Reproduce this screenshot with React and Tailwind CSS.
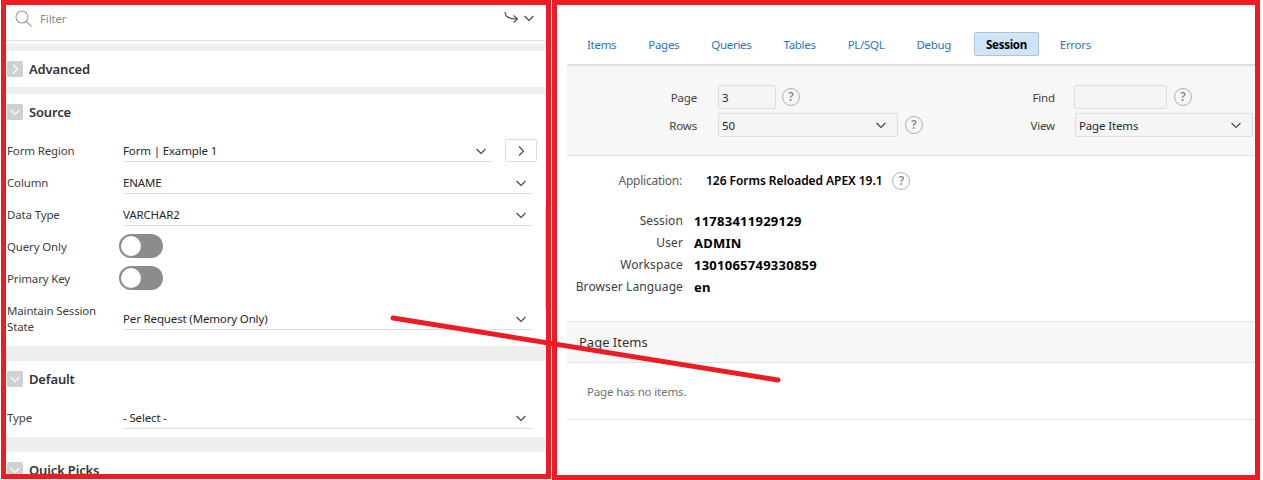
import React from 'react';

const Chevron = ({ dir = 'down', className = '', color = '#444' }) => (
    <svg width="12" height="12" viewBox="0 0 12 12" fill="none" stroke={color} strokeWidth="1.1" className={className}>
        {dir === 'down' ? <path d="M1.5 4l4.5 4.5L10.5 4" /> : <path d="M4 1.5L8.5 6 4 10.5" />}
    </svg>
);

const Help = () => (
    <span className="w-[18px] h-[18px] rounded-full border-[1.5px] border-[#b0b0b0] text-[#8a8a8a] text-[12px] font-semibold flex items-center justify-center shrink-0 leading-none">?</span>
);

const GrayBar = ({ h }) => <div className={`bg-[#eeeeee] ${h}`}></div>;

const SectionHeader = ({ title, open = true }) => (
    <div className="h-9 flex items-center gap-[6px] pl-[1px]">
        <span className="w-4 h-4 rounded-[2px] bg-[#d0d0d0] flex items-center justify-center">
            <Chevron dir={open ? 'down' : 'right'} color="#ffffff" />
        </span>
        <span className="text-[13px] font-semibold text-[#333] -mt-[1px]">{title}</span>
    </div>
);

const Value = ({ children }) => (
    <div className="flex-1 flex items-end border-b border-[#dfdfdf] pb-[1px]">
        <div className="flex-1 h-[18px] flex items-center justify-between pr-[6px]">
            <span className="text-[#262626]">{children}</span>
            <Chevron />
        </div>
    </div>
);

const SelectRow = ({ label, value, tall }) => (
    <div className={`flex pl-[1px] pr-[12px] ${tall ? 'h-10' : 'h-8'}`}>
        <label className={`w-[116px] shrink-0 text-[#404040] self-end ${tall ? 'leading-[16px] -mb-[5px]' : 'pb-[2px]'}`}>{label}</label>
        <Value>{value}</Value>
    </div>
);

const ToggleRow = ({ label }) => (
    <div className="flex items-end h-8 pl-[1px]">
        <label className="w-[112px] shrink-0 text-[#404040] pb-[2px]">{label}</label>
        <span className="w-11 h-6 rounded-full bg-[#8c8c8c] flex items-center pl-[2px]">
            <span className="w-5 h-5 rounded-full bg-white"></span>
        </span>
    </div>
);

const ToolLeft = () => (
    <div className="w-[548px] shrink-0 pl-[6px] pr-[3px] text-[11.5px] tracking-[-0.15px]">
        <div className="h-[41px] flex items-center justify-between border-b border-[#dfdfdf] pl-[9px] pr-[10px]">
            <div className="flex items-center gap-2 text-[#8a8a8a] -mt-[3px]">
                <svg width="17" height="17" viewBox="0 0 17 17" fill="none" stroke="#a0a0a0" strokeWidth="1.1">
                    <circle cx="7" cy="7" r="6" />
                    <path d="M11.5 11.5l5 5" />
                </svg>
                <span>Filter</span>
            </div>
            <div className="flex items-center gap-1 -mt-[4px]">
                <svg width="15" height="14" viewBox="0 0 15 14" fill="none" stroke="#444" strokeWidth="1.1">
                    <path d="M1 1c0 5 4 7 12 7" />
                    <path d="M9.5 4.5L13.5 8l-4 3.5" />
                </svg>
                <Chevron />
            </div>
        </div>
        <div className="h-[3px]"></div>
        <GrayBar h="h-[7px]" />
        <SectionHeader title="Advanced" open={false} />
        <GrayBar h="h-[7px]" />
        <SectionHeader title="Source" />
        <div className="flex h-8 pl-[1px] pr-[8px]">
            <label className="w-[116px] shrink-0 self-end pb-[2px] text-[#404040]">Form Region</label>
            <Value>Form | Example 1</Value>
            <button className="w-8 h-[23px] ml-3 self-end border border-[#dcdcdc] rounded-[2px] flex items-center justify-center">
                <Chevron dir="right" />
            </button>
        </div>
        <SelectRow label="Column" value="ENAME" />
        <SelectRow label="Data Type" value="VARCHAR2" />
        <ToggleRow label="Query Only" />
        <ToggleRow label="Primary Key" />
        <SelectRow label="Maintain Session State" value="Per Request (Memory Only)" tall />
        <div className="h-4"></div>
        <GrayBar h="h-[15px]" />
        <SectionHeader title="Default" />
        <SelectRow label="Type" value="- Select -" />
        <div className="h-2"></div>
        <GrayBar h="h-[15px]" />
        <SectionHeader title="Quick Picks" />
    </div>
);

const tabs = ['Items', 'Pages', 'Queries', 'Tables', 'PL/SQL', 'Debug', 'Session', 'Errors'];

const Field = ({ label, labelWidth, children }) => (
    <div className="flex items-center h-6">
        <span className={`${labelWidth} text-right text-[#404040] shrink-0 text-[11.5px] tracking-[-0.15px] pt-[2px]`}>{label}</span>
        {children}
    </div>
);

const InfoRow = ({ label, value }) => (
    <div className="flex h-[22px] items-center">
        <span className="w-[116px] text-right text-[#404040] shrink-0 tracking-[0.1px]">{label}</span>
        <span className="ml-[11px] font-bold text-[13px] tracking-[0.25px] text-black">{value}</span>
    </div>
);

const Input = ({ w, value, select, ml = 'ml-[21px]' }) => (
    <div className={`${w} ${ml} h-6 border border-[#dcdcdc] rounded-[2px] bg-[#f5f5f5] flex items-center justify-between pl-[3px] pr-[10px] text-[#262626] text-[11.5px] tracking-[-0.15px] shrink-0`}>
        <span className="pt-[1px]">{value}</span>
        {select && <Chevron />}
    </div>
);

const ToolRight = () => (
    <div className="flex-1 pl-[19px] pr-[5px]">
        <div className="h-[64px] pt-[32px] pl-[5px]">
            <div className="flex gap-[2px] text-[11.5px] tracking-[-0.3px]">
                {tabs.map((t) => (
                    <span
                        key={t}
                        className={
                            t === 'Session'
                                ? 'h-6 px-[11px] ml-[6px] mr-[4px] pt-[1px] flex items-center font-bold text-black bg-[#cfe4f7] border border-[#a9c5dc] rounded-[2px]'
                                : 'h-6 px-[15px] pt-[2px] flex items-center text-[#2b74c5]'
                        }
                    >
                        {t}
                    </span>
                ))}
            </div>
        </div>
        <div className="h-[92px] bg-[#f7f7f7] border-t-2 border-b border-t-[#dfdfdf] border-b-[#e2e2e2] flex pt-[19px] overflow-hidden">
            <div className="w-[430px] shrink-0 flex flex-col gap-1">
                <Field label="Page" labelWidth="w-[130px]">
                    <Input w="w-[58px]" value="3" />
                    <span className="ml-[6px]"><Help /></span>
                </Field>
                <Field label="Rows" labelWidth="w-[130px]">
                    <Input w="w-[180px]" value="50" select />
                    <span className="ml-[7px]"><Help /></span>
                </Field>
            </div>
            <div className="flex flex-col gap-1">
                <Field label="Find" labelWidth="w-[58px]">
                    <Input w="w-[93px]" value="" ml="ml-[19px]" />
                    <span className="ml-[7px]"><Help /></span>
                </Field>
                <Field label="View" labelWidth="w-[58px]">
                    <Input w="w-[178px]" value="Page Items" select ml="ml-[20px]" />
                </Field>
            </div>
        </div>
        <div className="h-[165px] pt-[16px]">
            <div className="flex items-center h-[18px]">
                <span className="w-[115px] text-right text-[#5a5a5a] shrink-0 tracking-[-0.25px]">Application:</span>
                <span className="ml-[24px] font-semibold text-black tracking-[-0.05px]">126 Forms Reloaded APEX 19.1</span>
                <span className="ml-[10px]"><Help /></span>
            </div>
            <div className="mt-[20px]">
                <InfoRow label="Session" value="11783411929129" />
                <InfoRow label="User" value="ADMIN" />
                <InfoRow label="Workspace" value="1301065749330859" />
                <InfoRow label="Browser Language" value="en" />
            </div>
        </div>
        <div className="h-[42px] bg-[#f8f8f8] border-y border-[#e0e0e0] flex items-center pl-3 text-[13px] text-[#333]">Page Items</div>
        <div className="h-[57px] border-b border-[#e0e0e0] flex items-center pl-5 pt-[2px] text-[11.5px] tracking-[-0.15px] text-[#707070]">Page has no items.</div>
    </div>
);

export default function App() {
    return (
        <div className="relative w-[1263px] h-[480px] overflow-hidden bg-white flex text-[12px] leading-[18px] font-['Noto_Sans',sans-serif]">
            <ToolLeft />
            <ToolRight />
            <div className="absolute left-[545px] top-[207px] w-[1px] h-[101px] bg-[#cfcfcf]"></div>
            <div className="absolute left-[1px] top-0 w-[550px] h-[479px] border-[5px] border-[#ed1c24]"></div>
            <div className="absolute left-[552px] top-0 w-[708px] h-[480px] border-[5px] border-[#ed1c24]"></div>
            <svg className="absolute left-0 top-0 pointer-events-none" width="1263" height="480">
                <line x1="393" y1="318" x2="778" y2="380" stroke="#ed1c24" strokeWidth="5" strokeLinecap="round" />
            </svg>
        </div>
    );
}
